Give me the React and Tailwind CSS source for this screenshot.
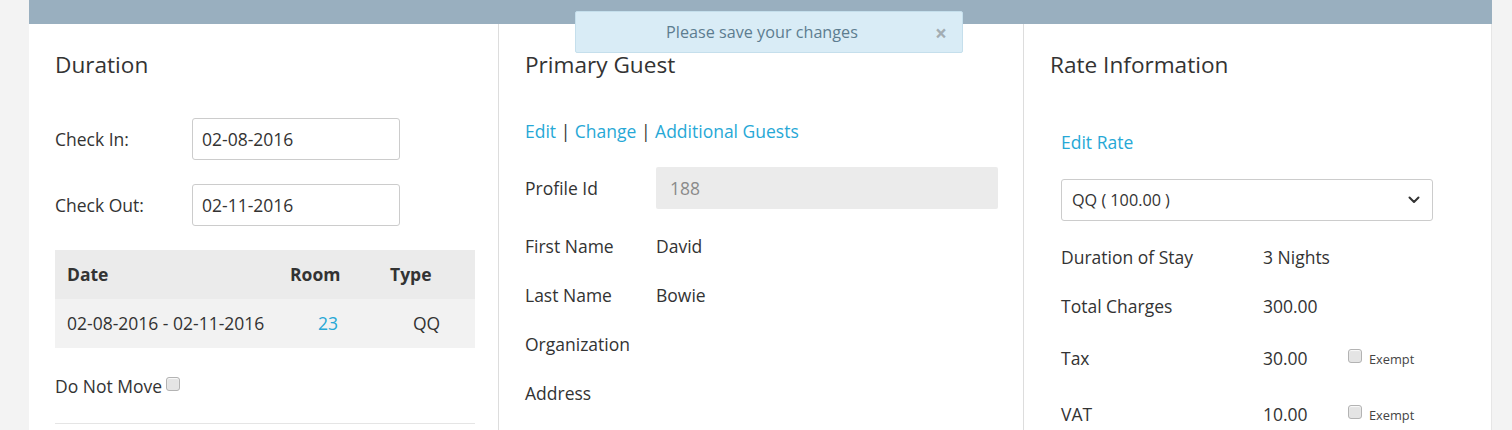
export default function App() {
  const Checkbox = ({ className = "" }) => (
    <span
      className={`inline-block w-[14px] h-[14px] rounded-[3px] border border-[#b3b3b3] bg-[#e4e4e4] shadow-[inset_0_1px_1px_rgba(255,255,255,0.8)] ${className}`}
    />
  );

  return (
    <div className="min-h-[430px] bg-[#f3f3f3] pl-[29px] pr-[20px] font-['Open_Sans',sans-serif] text-[17.5px] text-[#333333]">
      <div className="relative bg-white h-[430px] overflow-hidden">
        <div className="h-[24px] bg-[#99afbf]" />

        {/* Toast */}
        <div className="absolute left-[546px] top-[11px] w-[388px] h-[42px] rounded-[2px] border border-[#c5dfec] bg-[#d9ecf6] flex items-center justify-center pr-[14px] text-[16.2px] text-[#5d7d90]">
          <span>Please save your changes</span>
          <span className="absolute right-[15px] top-[9px] text-[21px] leading-[24px] font-bold text-[#a3adb3]">×</span>
        </div>

        <div className="grid grid-cols-[469px_525px_1fr] border-r border-[#e6e6e6] h-full">
          {/* Duration column */}
          <div className="pl-[26px] pr-[23px] pt-[26px]">
            <h2 className="text-[22.6px] leading-[30px] text-[#333]">Duration</h2>
            <div className="mt-[38px] flex items-center h-[42px]">
              <span className="w-[137px] leading-[24px]">Check In:</span>
              <div className="w-[208px] h-[42px] border border-[#cccccc] rounded-[3px] flex items-center pl-[9px] leading-[24px]">
                02-08-2016
              </div>
            </div>
            <div className="mt-[24px] flex items-center h-[42px]">
              <span className="w-[137px] leading-[24px]">Check Out:</span>
              <div className="w-[208px] h-[42px] border border-[#cccccc] rounded-[3px] flex items-center pl-[9px] leading-[24px]">
                02-11-2016
              </div>
            </div>

            <table className="mt-[24px] w-full border-collapse">
              <thead>
                <tr className="bg-[#ebebeb] h-[49px]">
                  <th className="w-[223px] text-left pl-[12px] font-bold">Date</th>
                  <th className="w-[100px] text-left pl-[12px] font-bold">Room</th>
                  <th className="text-left pl-[12px] font-bold">Type</th>
                </tr>
              </thead>
              <tbody>
                <tr className="bg-[#f2f2f2] h-[49px]">
                  <td className="pl-[12px]">02-08-2016 - 02-11-2016</td>
                  <td className="text-center text-[#27a8d6]">23</td>
                  <td className="text-center">QQ</td>
                </tr>
              </tbody>
            </table>

            <div className="mt-[26px] h-[24px] flex items-start leading-[24px]">
              <span>Do Not Move</span>
              <Checkbox className="ml-[4px] mt-[3px]" />
            </div>
            <div className="mt-[25px] h-px bg-[#e5e5e5]" />
          </div>

          {/* Primary Guest column */}
          <div className="border-l border-[#dddddd] pl-[26px] pr-[25px] pt-[26px]">
            <h2 className="text-[22.6px] leading-[30px] text-[#333]">Primary Guest</h2>
            <div className="mt-[39px] leading-[24px]">
              <span className="text-[#27a8d6]">Edit</span>
              <span> | </span>
              <span className="text-[#27a8d6]">Change</span>
              <span> | </span>
              <span className="text-[#27a8d6]">Additional Guests</span>
            </div>
            <div className="mt-[24px] flex items-center h-[42px]">
              <span className="w-[131px] leading-[24px]">Profile Id</span>
              <div className="flex-1 h-[42px] rounded-[2px] bg-[#ebebeb] flex items-center pl-[14px] text-[#8a8a8a]">
                188
              </div>
            </div>
            <div className="mt-[13px]">
              {[
                ["First Name", "David"],
                ["Last Name", "Bowie"],
                ["Organization", ""],
                ["Address", ""],
              ].map(([l, v]) => (
                <div key={l} className="h-[49px] flex items-center">
                  <span className="w-[131px]">{l}</span>
                  <span>{v}</span>
                </div>
              ))}
            </div>
          </div>

          {/* Rate Information column */}
          <div className="border-l border-[#dddddd] pl-[26px] pt-[26px]">
            <h2 className="text-[22.6px] leading-[30px] text-[#333]">Rate Information</h2>
            <div className="pl-[11px] w-[383px]">
              <div className="mt-[50px] leading-[24px] text-[#27a8d6]">Edit Rate</div>
              <div className="mt-[25px] h-[42px] border border-[#cccccc] rounded-[3px] flex items-center justify-between pl-[10px] pr-[12px] text-[16.2px]">
                <span>QQ ( 100.00 )</span>
                <svg width="12" height="8" viewBox="0 0 12 8" fill="none">
                  <polyline points="1.5,1.5 6,6 10.5,1.5" stroke="#333" strokeWidth="2" strokeLinecap="round" strokeLinejoin="round" />
                </svg>
              </div>
              <div className="mt-[12px]">
                <div className="h-[49px] flex items-center">
                  <span className="w-[202px]">Duration of Stay</span>
                  <span>3 Nights</span>
                </div>
                <div className="h-[49px] flex items-center">
                  <span className="w-[202px]">Total Charges</span>
                  <span>300.00</span>
                </div>
                <div className="h-[55px] flex items-center">
                  <span className="w-[202px]">Tax</span>
                  <span className="w-[85px]">30.00</span>
                  <Checkbox className="mb-[5px]" />
                  <span className="ml-[7px] mt-[3px] text-[12.8px] text-[#444]">Exempt</span>
                </div>
                <div className="h-[57px] flex items-center">
                  <span className="w-[202px]">VAT</span>
                  <span className="w-[85px]">10.00</span>
                  <Checkbox className="mb-[5px]" />
                  <span className="ml-[7px] mt-[3px] text-[12.8px] text-[#444]">Exempt</span>
                </div>
              </div>
            </div>
          </div>
        </div>
      </div>
    </div>
  );
}
